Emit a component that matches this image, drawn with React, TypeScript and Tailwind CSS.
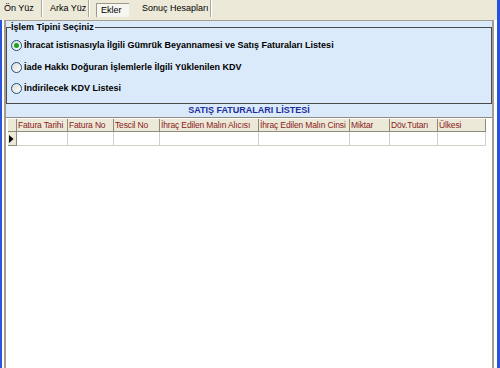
import React from "react";

const columns = [
  { label: "Fatura Tarihi", w: "w-[51px]" },
  { label: "Fatura No", w: "w-[46px]" },
  { label: "Tescil No", w: "w-[46px]" },
  { label: "İhraç Edilen Malın Alıcısı", w: "w-[99px]" },
  { label: "İhraç Edilen Malın Cinsi", w: "w-[91px]" },
  { label: "Miktar", w: "w-[40px]" },
  { label: "Döv.Tutarı", w: "w-[48px]" },
  { label: "Ülkesi", w: "w-[48px]" },
];

const options = [
  "İhracat istisnasıyla İlgili Gümrük Beyannamesi ve Satış Faturaları Listesi",
  "İade Hakkı Doğuran İşlemlerle İlgili Yüklenilen KDV",
  "İndirilecek KDV Listesi",
];

const Separator = () => (
  <div className="flex h-[17px]">
    <div className="w-px bg-[#ACA899]" />
    <div className="w-px bg-white" />
  </div>
);

const Radio = ({ checked }: { checked: boolean }) => (
  <span className="flex h-[11px] w-[11px] shrink-0 items-center justify-center rounded-full border border-[#1C5180] bg-gradient-to-br from-[#DCDBD5] to-white">
    {checked && <span className="h-[5px] w-[5px] rounded-full bg-[#21A121]" />}
  </span>
);

const TabStrip = () => (
  <div className="flex h-[20px] items-start whitespace-nowrap text-[9px]">
    <div className="flex h-[17px] w-[41px] items-center pl-[4px]">Ön Yüz</div>
    <Separator />
    <div className="flex h-[17px] w-[45px] items-center pl-[7px]">Arka Yüz</div>
    <Separator />
    <div className="ml-[6px] mt-[3px] flex h-[14px] w-[33px] items-center border-t border-l border-[#9D9A8C] border-b-white border-r-white bg-[#F6F5EF] pl-[4px]">
      Ekler
    </div>
    <div className="flex h-[17px] w-[81px] items-center pl-[13px]">Sonuç Hesapları</div>
    <Separator />
  </div>
);

export default function App() {
  return (
    <div className="flex h-[368px] w-[500px] overflow-hidden bg-[#ECE9D8] font-['Liberation_Sans',Arial,sans-serif] text-black">
      <div className="flex flex-1 flex-col">
        <TabStrip />

        <div className="flex flex-1">
          <div className="w-[2px] bg-[#2B55D8]" />
          <div className="w-[2px] bg-white" />

          <div className="flex flex-1 flex-col border-x-2 border-t border-[#A19E90] bg-white">
            {/* İşlem tipi */}
            <div className="h-[83px] bg-[#DBEAFB] pt-[6px]">
              <div className="relative h-[77px] border border-[#4A4A4A] pl-[4px] pt-[7px]">
                <span className="absolute -top-[6px] left-[4px] bg-[#DBEAFB] pr-[1px] text-[9px] font-bold leading-[11px]">
                  İşlem Tipini Seçiniz
                </span>
                {options.map((o, i) => (
                  <div key={o} className="flex h-[21.5px] items-center gap-[2px]">
                    <Radio checked={i === 0} />
                    <span className="text-[9px] font-bold">{o}</span>
                  </div>
                ))}
              </div>
            </div>

            <div className="flex h-[13px] items-center justify-center bg-[#DBEAFB] text-[9px] font-bold text-[#1B2E9E]">
              SATIŞ FATURALARI LİSTESİ
            </div>

            {/* grid */}
            <div className="flex-1 border-t border-[#8E8B7E] bg-white pl-[2px] pt-px">
              <div className="flex h-[13px]">
                <div className="w-[9px] border-r border-b border-[#8E8B7E] bg-[#ECE9D8]" />
                {columns.map((c) => (
                  <div
                    key={c.label}
                    className={`${c.w} flex items-center overflow-hidden whitespace-nowrap border-r border-b border-[#8E8B7E] bg-[#ECE9D8] pl-[1px] text-[8.5px] tracking-[-0.15px] text-[#8B1A1A]`}
                  >
                    {c.label}
                  </div>
                ))}
              </div>
              <div className="flex h-[14px]">
                <div className="flex w-[9px] items-center border-r border-b border-[#8E8B7E] bg-[#ECE9D8] pl-[1px]">
                  <svg width="5" height="8" viewBox="0 0 5 8">
                    <path d="M0 0 L4.5 4 L0 8 Z" fill="#000" />
                  </svg>
                </div>
                {columns.map((c) => (
                  <div key={c.label} className={`${c.w} border-r border-b border-[#D4D0C8]`} />
                ))}
              </div>
            </div>
          </div>

          <div className="w-[3px] bg-white" />
        </div>
      </div>
      <div className="w-[3px] bg-[#2152E0]" />
    </div>
  );
}
